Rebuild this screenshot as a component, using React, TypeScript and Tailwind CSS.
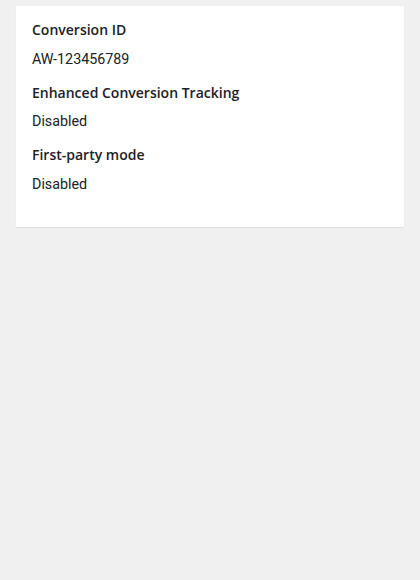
import React from "react";

const rows = [
  { label: "Conversion ID", value: "AW-123456789" },
  { label: "Enhanced Conversion Tracking", value: "Disabled" },
  { label: "First-party mode", value: "Disabled" },
];

export default function App() {
  return (
    <div className="min-h-[580px] bg-[#f0f0f0] px-4 pt-[6px]">
      <div className="bg-white px-4 pt-[14px] pb-[33px] shadow-[0_1px_1px_rgba(0,0,0,0.06)]">
        {rows.map((row, i) => (
          <div key={row.label} className={i > 0 ? "mt-[14px]" : ""}>
            <div className="font-['Open_Sans',sans-serif] text-[14px] leading-5 font-semibold text-[#202124]">
              {row.label}
            </div>
            <div className="mt-[8.5px] font-['Roboto',sans-serif] text-[14.3px] leading-5 text-[#202124]">
              {row.value}
            </div>
          </div>
        ))}
      </div>
    </div>
  );
}
